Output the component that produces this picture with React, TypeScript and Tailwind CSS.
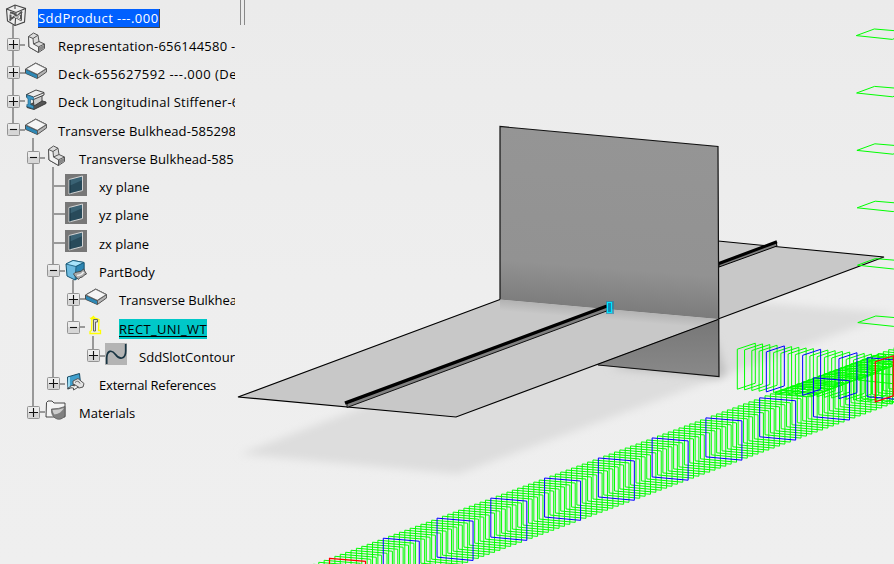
import type { ReactNode } from 'react';

type Kind = 'root' | 'shape' | 'plate' | 'beam' | 'plane' | 'body' | 'slot' | 'curve' | 'refs' | 'folder';

interface Row {
  label: string;
  kind: Kind;
  depth: number;
  toggle?: '+' | '-';
  last?: boolean;
  pass?: boolean[];
  spacing: string;
  mark?: 'blue' | 'teal';
}

const rows: Row[] = [
  { label: 'SddProduct ---.000', kind: 'root', depth: 0, toggle: '-', spacing: 'tracking-[0.45px]', mark: 'blue' },
  { label: 'Representation-656144580 -', kind: 'shape', depth: 1, toggle: '+', spacing: 'tracking-[0.22px]' },
  { label: 'Deck-655627592 ---.000 (De', kind: 'plate', depth: 1, toggle: '+', spacing: 'tracking-[0.48px]' },
  { label: 'Deck Longitudinal Stiffener-6', kind: 'beam', depth: 1, toggle: '+', spacing: 'tracking-[0.22px]' },
  { label: 'Transverse Bulkhead-585298', kind: 'plate', depth: 1, toggle: '-', last: true, spacing: 'tracking-[0.1px]' },
  { label: 'Transverse Bulkhead-585', kind: 'shape', depth: 2, toggle: '-', pass: [false], spacing: 'tracking-[0.07px]' },
  { label: 'xy plane', kind: 'plane', depth: 3, pass: [false, true], spacing: 'tracking-[0px]' },
  { label: 'yz plane', kind: 'plane', depth: 3, pass: [false, true], spacing: 'tracking-[0px]' },
  { label: 'zx plane', kind: 'plane', depth: 3, pass: [false, true], spacing: 'tracking-[0px]' },
  { label: 'PartBody', kind: 'body', depth: 3, toggle: '-', pass: [false, true], spacing: 'tracking-[0px]' },
  { label: 'Transverse Bulkhea', kind: 'plate', depth: 4, toggle: '+', pass: [false, true, true], spacing: 'tracking-[-0.05px]' },
  { label: 'RECT_UNI_WT', kind: 'slot', depth: 4, toggle: '-', last: true, pass: [false, true, true], spacing: 'tracking-[0.35px]', mark: 'teal' },
  { label: 'SddSlotContour', kind: 'curve', depth: 5, toggle: '+', last: true, pass: [false, true, true, false], spacing: 'tracking-[0.03px]' },
  { label: 'External References', kind: 'refs', depth: 3, toggle: '+', last: true, pass: [false, true], spacing: 'tracking-[-0.18px]' },
  { label: 'Materials', kind: 'folder', depth: 2, toggle: '+', last: true, pass: [false], spacing: 'tracking-[0px]' },
];

const art: Record<Kind, ReactNode> = {
  root: (
    <g fill="none" stroke="#444" strokeWidth="1.1">
      <path d="M1.500 5 10 1 20.500 4.500 19.500 18 10 21.500 2.500 17Z" fill="#eee" />
      <path d="M1.500 5 11 8.500 20.500 4.500M11 8.500 10 21.500M10 1V5" />
      <path d="M5 8.500l4 1 3 3 5-5M4.500 16.500l5-4 7 4M5.500 10.500v5M16 8.500v8" stroke="#555" strokeWidth="2" />
      <path d="M6 10l10 6M16 10 6 16.500" stroke="#ddd" strokeWidth=".9" />
    </g>
  ),
  shape: (
    <g stroke="#555" strokeWidth="1" strokeLinejoin="round">
      <path d="M3.500 4.500 8.500 1 13 3.200 14 9.500 19.500 12 19.500 16.500 13.500 20.500 4 15Z" fill="#dcdcdc" />
      <path d="M3.500 4.500 8 6.500 8.500 12 13.500 14.800 13.500 20.500 4 15Z" fill="#f3f3f3" />
      <path d="M8 6.500 13 3.200M8.500 12 14 9.500M13.500 14.800 19.500 12" fill="none" />
      <path d="M14 15.200 19 12.900 19 16.200 14 19.600Z" fill="#888" stroke="none" />
    </g>
  ),
  plate: (
    <g strokeLinejoin="round">
      <path d="M.5 8 10.700 2 21.500 7.500V11L12.300 17.500.5 12.300Z" fill="#444" stroke="#444" strokeWidth=".9" />
      <path d="M1 8.700 12 13.900V17.300L1 12.200Z" fill="#2e88b5" />
      <path d="M12.800 13.700 21.200 8.300V10.700L12.800 16.700Z" fill="#b5b5b5" />
      <path d="M.9 7.900 10.700 2.300 21.200 7.600 12.300 13.300Z" fill="#f6f6f6" stroke="#666" strokeWidth=".8" />
    </g>
  ),
  beam: (
    <g strokeLinejoin="round" stroke="#333" strokeWidth=".9">
      <path d="M2 17 14 11 21 13V14.500L9 20.500 2 18.500Z" fill="#555" />
      <path d="M8 8.500 17 5V12L9 17Z" fill="#ccc" />
      <path d="M1.500 5.500 11 1 19 3.500V6L8.500 10.500 1.500 8Z" fill="#ececec" />
      <path d="M1.500 5.500 8.500 8 19 3.700" fill="none" />
      <path d="M1.800 5.800 8.500 8.200V11L5.500 10V15.500L8.500 17V19.800L1.800 17.500V15.500L3 15.800V9.500L1.800 9Z" fill="#3c97c6" stroke="#1f5b78" strokeWidth=".6" />
    </g>
  ),
  plane: (
    <g>
      <rect width="22" height="22" fill="#777" />
      <path d="M4 5.500 17.500 2V16.500L4 20Z" fill="#3a6274" />
      <path d="M4 12 17.500 6V16.500L4 20Z" fill="#284a5a" />
      <path d="M4 5.500 17.500 2V16.500L4 20Z" fill="none" stroke="#d4d4d4" strokeWidth="1" />
      <path d="M5 5.800V19.500" stroke="#183442" />
    </g>
  ),
  body: (
    <g strokeLinejoin="round">
      <path d="M1 5 8 1.500 19 3.500V14L10 21 2 17Z" fill="#6ebbe0" stroke="#145573" />
      <path d="M1 5 8 1.500 19 3.500 11 7.500Z" fill="#a9e4fb" stroke="#145573" strokeWidth=".8" />
      <path d="M11 7.500 19 3.500V14L10 21Z" fill="#2d86b3" stroke="#145573" strokeWidth=".8" />
      <path d="M8.500 15q1-2 4-2 4 0 6-3l3 5q-3 1-4 3-3 0-4 2.500-3-2-5-5.500Z" fill="#aaa" stroke="#444" strokeWidth=".9" />
      <path d="M12 16.500q4 0 6.500-3.500" stroke="#eee" strokeWidth="1.600" fill="none" />
    </g>
  ),
  slot: (
    <g fill="none">
      <path d="M6 3.500 8.500 1.500 10 3.500 6 3.500 7 4.500 6.500 15.500 5 16.500V18.500H15.500V15.500H13.500L14 4.500 10 3" stroke="#ffff00" strokeWidth="1.300" />
      <path d="M8.500 16V4.500H12.500V7H10.500V16Z" fill="#ddd" stroke="#666" strokeWidth="1" />
    </g>
  ),
  curve: (
    <g>
      <rect width="22" height="22" fill="#b4b4b4" />
      <path d="M1.700 21V15C2 7 7 6.500 10.500 11.500S20.700 17 20.700 8V1" fill="none" stroke="#183442" strokeWidth="1.700" />
    </g>
  ),
  refs: (
    <g strokeLinejoin="round">
      <path d="M2.500 5 14.500 1.500 15.500 11 3 17Z" fill="#3f9fcd" stroke="#174963" />
      <path d="M3 15.500V5.500l2-.7v10z" fill="#9bdaf0" />
      <path d="M8 9 13 6.500 19 11.500 18 15 14 16 8 12.500Z" fill="#e4e4e4" stroke="#555" />
      <path d="M10 10.500q3-3 5 1" fill="none" stroke="#666" />
      <path d="M2.500 17q4-5 7-3l-1-2 5 3-5 3v-2q-3-1-6 1Z" fill="#f2f2f2" stroke="#444" strokeWidth=".9" />
    </g>
  ),
  folder: (
    <g strokeLinejoin="round">
      <path d="M1 17 1.500 2.500 3 1H7L9 3H20V17H9Z" fill="#f4f4f4" stroke="#333" strokeWidth=".9" />
      <path d="M6.500 9Q14 9 20 6.500V16Q15 21.500 10 18 6 15 6.500 9Z" fill="#808080" stroke="#555" strokeWidth=".7" />
      <path d="M7.500 10Q14 10 19 8 16 13.500 9.500 14.500 8 13 7.500 10Z" fill="#ccc" />
    </g>
  ),
};

function Toggle({ sign }: { sign: '+' | '-' }) {
  return (
    <svg className="relative block size-[13px]" viewBox="0 0 13 13">
      <rect x=".5" y=".5" width="12" height="12" rx="1" fill="#d6d6d6" stroke="#949494" />
      <rect x="1" y="1" width="11" height="5" fill="#ececec" />
      <path d={sign === '+' ? 'M2 6.5H11M6.5 2V11' : 'M3 6.5H10'} stroke="#111" strokeWidth="1.1" />
    </svg>
  );
}

function TreeRow({ row }: { row: Row }) {
  const open = row.toggle === '-';
  return (
    <li className="flex h-[28.27px] items-center">
      {(row.pass ?? []).map((on, i) => (
        <span key={i} className="flex h-full w-5 shrink-0 justify-center">
          {on && <span className="w-0.5 bg-[#999]" />}
        </span>
      ))}
      {row.depth > 0 && (
        <span className="relative flex h-full w-5 shrink-0 items-center justify-center pb-[1.5px]">
          <span className={`absolute left-[9px] top-0 w-0.5 bg-[#999] ${row.last ? 'h-[13px]' : 'h-full'}`} />
          <span className="absolute left-2.5 top-[12.5px] h-0.5 w-3 bg-[#999]" />
          {row.toggle && <Toggle sign={row.toggle} />}
        </span>
      )}
      <span className="relative ml-0.5 flex h-full w-[22px] shrink-0 items-center pb-1">
        {open && <span className="absolute bottom-0 left-[7px] h-1.5 w-0.5 bg-[#999]" />}
        <svg className="relative block size-[22px] shrink-0" viewBox="0 0 22 22">
          {art[row.kind]}
        </svg>
      </span>
      <span
        className={`shrink-0 whitespace-pre ${row.depth > 1 ? 'ml-3' : 'ml-[11px]'} ${row.spacing} ${
          row.mark === 'blue'
            ? 'mt-0.5 h-[19px] border-b border-r border-[#444] bg-[#0060ff] leading-[19px] text-white'
            : row.mark === 'teal'
              ? 'mt-px h-[20px] bg-[#00c8c8] leading-[20px] underline underline-offset-2'
              : 'mt-px leading-[20px]'
        }`}
      >
        {row.label}
      </span>
    </li>
  );
}

const frame = (x: number, y: number) => `M${x} ${y}l36 3v39.3l-36-3.3z`;
const side = (x: number, y: number) => `M${x} ${y}l18-6v40l-18 6z`;
const flat = (x: number, y: number) => `M${x} ${y}l18-6.6 36 3-18 7.4z`;
const range = (n: number) => Array.from({ length: n }, (_, i) => i);

const longRow = range(114).map((i) => ({ x: 308 + i * 5.377, y: 566.3 - i * 2.006, i }));
const crossRow = range(22).map((i) => ({ x: 737.3 + i * 7.26, y: 349.2 + i * 0.68, i }));

function Scene() {
  return (
    <svg className="absolute inset-0 block" width="894" height="564" viewBox="0 0 894 564">
      <defs>
        <linearGradient id="sky" x1="0" y1="0" x2="0" y2="1">
          <stop offset="0" stopColor="#ebebeb" />
          <stop offset=".5" stopColor="#eeeeee" />
          <stop offset="1" stopColor="#efefef" />
        </linearGradient>
        <linearGradient id="wall" x1="600" y1="130" x2="586" y2="312" gradientUnits="userSpaceOnUse">
          <stop offset="0" stopColor="#959595" />
          <stop offset=".75" stopColor="#929292" />
          <stop offset="1" stopColor="#7a7a7a" />
        </linearGradient>
        <linearGradient id="under" x1="0" y1="320" x2="0" y2="376" gradientUnits="userSpaceOnUse">
          <stop offset="0" stopColor="#777777" />
          <stop offset="1" stopColor="#898989" />
        </linearGradient>
        <linearGradient id="contact" x1="600" y1="307" x2="599" y2="319" gradientUnits="userSpaceOnUse">
          <stop offset="0" stopColor="#b0b0b0" />
          <stop offset="1" stopColor="#c8c8c8" />
        </linearGradient>
        <filter id="soft" x="-20%" y="-20%" width="140%" height="140%">
          <feGaussianBlur stdDeviation="4" />
        </filter>
        <clipPath id="front">
          <path d="M238 397 500 299.5 718 319 456 417Z" />
        </clipPath>
      </defs>
      <rect width="894" height="564" fill="url(#sky)" />
      <path d="M240 454 420 385 718 300 894 313 458 474Z" fill="#dddddd" filter="url(#soft)" />
      <path d="M610 368 719 378 726 374 716 340Z" fill="#bdbdbd" filter="url(#soft)" />

      <path d="M718 241 884 257 718 319Z" fill="#c8c8c8" />
      <path d="M718 241 884 257 718 319" fill="none" stroke="#000" strokeWidth="1.1" />
      <path d="M719 264 776 242 777 246 719 267Z" fill="#808080" stroke="#000" />
      <path d="M719 263.5 777 241.8" stroke="#000" strokeWidth="3.2" />

      <path d="M500 126.5 718 146.5 719 376.5 500 356Z" fill="url(#wall)" />
      <path d="M598 365 719 319V376.5Z" fill="url(#under)" />
      <path d="M500 300V126.5L718 146.5 719 376.5 598 365" fill="none" stroke="#111" strokeWidth="1.2" />

      <path d="M238 397 500 299.5 718 319 456 417Z" fill="#c8c8c8" />
      <path d="M500 299.5 718 319 718 333 500 313.5Z" fill="url(#contact)" clipPath="url(#front)" />
      <path d="M500 299.5 238 397 456 417 718 319.5" fill="none" stroke="#000" strokeWidth="1.2" />
      <path d="M347 403 608 306 608 310.500 347 407.500Z" fill="#808080" stroke="#111" strokeWidth="1" />
      <path d="M345 403.2 607 306" stroke="#000" strokeWidth="3.4" />
      <rect x="606" y="301" width="8" height="13" fill="#1384b2" opacity=".6" />
      <rect x="607.5" y="302.5" width="4" height="10" fill="#1384b2" stroke="#00e8ff" strokeWidth="1.1" />

      <g fill="none" strokeWidth="1">
        <g stroke="#00ff00">
          <path d={range(7).map((i) => flat(856.3 + i * 0.3, 35.6 + i * 57.4)).join('')} />
          {longRow.filter((p) => p.i % 10 !== 4).map((p) => (
            <path key={p.i} d={frame(p.x, p.y)} />
          ))}
          {range(13).map((i) => (
            <path key={i} d={flat(775 + i * 7.2, 393 - i * 2.7)} />
          ))}
          {crossRow.filter((p) => p.i % 5 !== 4).map((p) => (
            <path key={p.i} d={side(p.x, p.y)} />
          ))}
        </g>
        <path stroke="#0000ff" d={longRow.filter((p) => p.i % 10 === 4 && p.i > 4).map((p) => frame(p.x, p.y)).join('')} />
        <path stroke="#0000ff" d={crossRow.filter((p) => p.i % 5 === 4 && p.i < 19).map((p) => side(p.x, p.y)).join('')} />
        <path stroke="#ff0000" strokeWidth="1.2" d={frame(329.5, 558.3) + side(875.3, 361.8)} />
      </g>
    </svg>
  );
}

export default function App() {
  return (
    <main className="relative h-[564px] w-[894px] overflow-hidden bg-[#eeeeee]">
      <Scene />
      <div className="relative flex items-start">
        <ul className="w-[235px] overflow-hidden pl-[3px] pt-[3px] font-['Open_Sans','Noto_Sans',sans-serif] text-[13px] text-black">
          {rows.map((row, i) => (
            <TreeRow key={i} row={row} />
          ))}
        </ul>
        <span className="ml-[5px] h-[25px] w-[5px] border-x border-[#888]" />
      </div>
    </main>
  );
}
